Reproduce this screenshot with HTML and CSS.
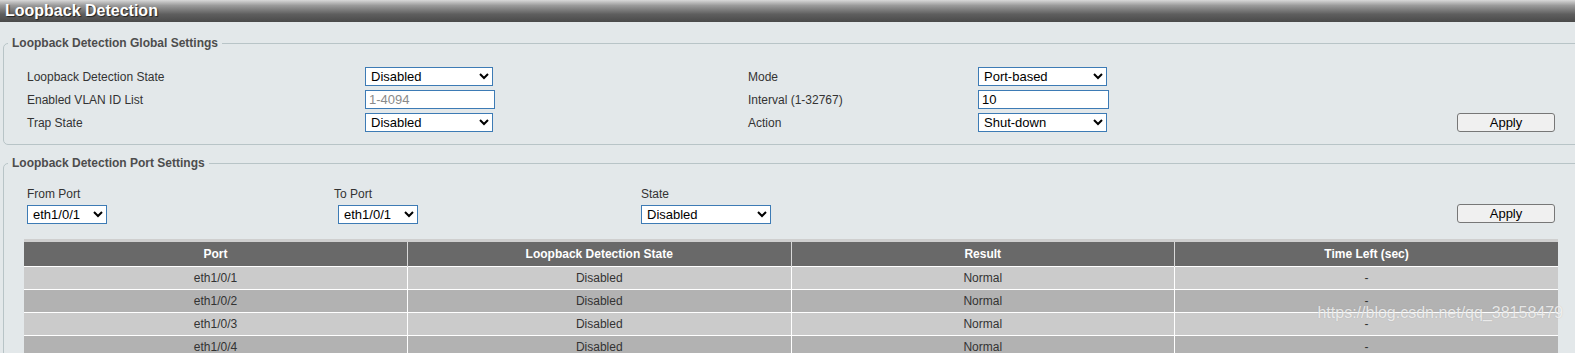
FILE: index.html
```html
<!DOCTYPE html>
<html lang="en">
<head>
    <title>Loopback Detection</title>
    <link rel="stylesheet" href="styles.css">
</head>
<body>

<div class="title-bar">Loopback Detection</div>

<!-- Global settings -->
<fieldset class="box">
    <legend>Loopback Detection Global Settings</legend>
    <div class="wrap global-grid">
        <label>Loopback Detection State</label>
        <div><select class="sel w128"><option>Disabled</option><option>Enabled</option></select></div>
        <label>Mode</label>
        <div><select class="sel w129"><option>Port-based</option><option>VLAN-based</option></select></div>
        <div></div>

        <label>Enabled VLAN ID List</label>
        <div><input class="txt w130" type="text" placeholder="1-4094"></div>
        <label>Interval (1-32767)</label>
        <div><input class="txt w131" type="text" value="10"></div>
        <div></div>

        <label>Trap State</label>
        <div><select class="sel w128"><option>Disabled</option><option>Enabled</option></select></div>
        <label>Action</label>
        <div><select class="sel w129"><option>Shut-down</option><option>None</option></select></div>
        <div class="btn-cell"><button class="btn">Apply</button></div>
    </div>
</fieldset>

<!-- Port settings -->
<fieldset class="box box-last">
    <legend>Loopback Detection Port Settings</legend>
    <div class="wrap">
        <div class="port-form">
            <div class="field">
                <label>From Port</label>
                <select class="sel w80"><option>eth1/0/1</option></select>
            </div>
            <div class="field to-port">
                <label>To Port</label>
                <select class="sel w80"><option>eth1/0/1</option></select>
            </div>
            <div class="field">
                <label>State</label>
                <select class="sel w130"><option>Disabled</option><option>Enabled</option></select>
            </div>
            <div class="btn-cell"><button class="btn">Apply</button></div>
        </div>

        <table class="grid-table">
            <thead>
                <tr>
                    <th>Port</th>
                    <th>Loopback Detection State</th>
                    <th>Result</th>
                    <th>Time Left (sec)</th>
                </tr>
            </thead>
            <tbody>
                <tr><td>eth1/0/1</td><td>Disabled</td><td>Normal</td><td>-</td></tr>
                <tr><td>eth1/0/2</td><td>Disabled</td><td>Normal</td><td>-</td></tr>
                <tr><td>eth1/0/3</td><td>Disabled</td><td>Normal</td><td>-</td></tr>
                <tr><td>eth1/0/4</td><td>Disabled</td><td>Normal</td><td>-</td></tr>
            </tbody>
        </table>
    </div>
</fieldset>

<div class="watermark">https://blog.csdn.net/qq_38158479</div>

</body>
</html>
```

FILE: styles.css
```css
body {
    margin: 0;
    padding: 0;
    background-color: #e3e8ea;
    font-family: "Liberation Sans", Arial, sans-serif;
    font-size: 12px;
    color: #333333;
    overflow: hidden;
}
.title-bar {
    height: 22px;
    line-height: 22px;
    padding-left: 5px;
    font-size: 16px;
    font-weight: bold;
    color: #ffffff;
    text-shadow: 1px 1px 1px #222222;
    background: linear-gradient(to bottom, #d8d8d8 0%, #9a9a9a 25%, #5e5e5e 65%, #4a4a4a 100%);
}
.box {
    margin: 14px -20px 0 3px;
    padding: 15px 0 10px 4px;
    border: 1px solid #b8c4c7;
    border-radius: 5px;
}
.box + .box {
    margin-top: 11px;
}
.box-last {
    padding-top: 17px;
    padding-bottom: 40px;
}
.box legend {
    padding: 0 4px;
    font-size: 12px;
    font-weight: bold;
    color: #4d4d4d;
    line-height: 14px;
}
.wrap {
    margin-left: 16px;
    width: 1534px;
}
.global-grid {
    display: grid;
    grid-template-columns: 341px 380px 233px 1fr 101px;
    grid-auto-rows: 23px;
    align-items: center;
}
.global-grid label {
    padding-left: 3px;
}
.sel {
    height: 19px;
    border: 1px solid #3d7bb5;
    border-radius: 0;
    background-color: #ffffff;
    font-family: "Liberation Sans", Arial, sans-serif;
    font-size: 13px;
    color: #000000;
    padding: 0 0 0 1px;
    margin: 0;
}
.txt {
    height: 19px;
    box-sizing: border-box;
    border: 1px solid #3d7bb5;
    background-color: #ffffff;
    font-family: "Liberation Sans", Arial, sans-serif;
    font-size: 13px;
    color: #000000;
    padding: 0 3px;
    margin: 0;
    outline: none;
}
.txt::placeholder {
    color: #8a8a8a;
}
.w80 { width: 80px; }
.w128 { width: 128px; }
.w129 { width: 129px; }
.w130 { width: 130px; }
.w131 { width: 131px; }
.btn-cell {
    display: flex;
    justify-content: flex-end;
}
.btn {
    flex: none;
    width: 98px;
    height: 19px;
    border: 1px solid #777777;
    border-radius: 3px;
    background-color: #f0f0f0;
    font-family: "Liberation Sans", Arial, sans-serif;
    font-size: 13px;
    color: #000000;
    padding: 0;
    margin-right: 3px;
}
.port-form {
    display: grid;
    grid-template-columns: 307px 307px 1fr auto;
    align-items: end;
}
.field {
    display: flex;
    flex-direction: column;
    align-items: flex-start;
    padding-left: 3px;
}
.field label {
    line-height: 15px;
    margin-bottom: 3px;
}
.to-port .sel {
    margin-left: 4px;
}
.port-form .btn-cell {
    padding-bottom: 1px;
}
.grid-table {
    width: 1534px;
    margin-top: 15px;
    border-collapse: collapse;
    border-top: 3px solid #cfcfcf;
    table-layout: fixed;
}
.grid-table th {
    height: 24px;
    padding: 0;
    background-color: #696969;
    color: #ffffff;
    font-weight: bold;
    font-size: 12px;
    border-left: 1px solid #d8d8d8;
}
.grid-table td {
    height: 22px;
    padding: 0;
    text-align: center;
    color: #333333;
    border-left: 1px solid #ffffff;
    border-top: 1px solid #ffffff;
}
.grid-table th:first-child,
.grid-table td:first-child {
    border-left: none;
}
.grid-table tbody tr:nth-child(odd) td {
    background-color: #cbcbcb;
}
.grid-table tbody tr:nth-child(even) td {
    background-color: #b2b2b2;
}
.watermark {
    position: absolute;
    right: 12px;
    top: 304px;
    font-size: 16px;
    color: rgba(255, 255, 255, 0.75);
    text-shadow: 0 0 1px rgba(120, 120, 120, 0.4);
}
```
